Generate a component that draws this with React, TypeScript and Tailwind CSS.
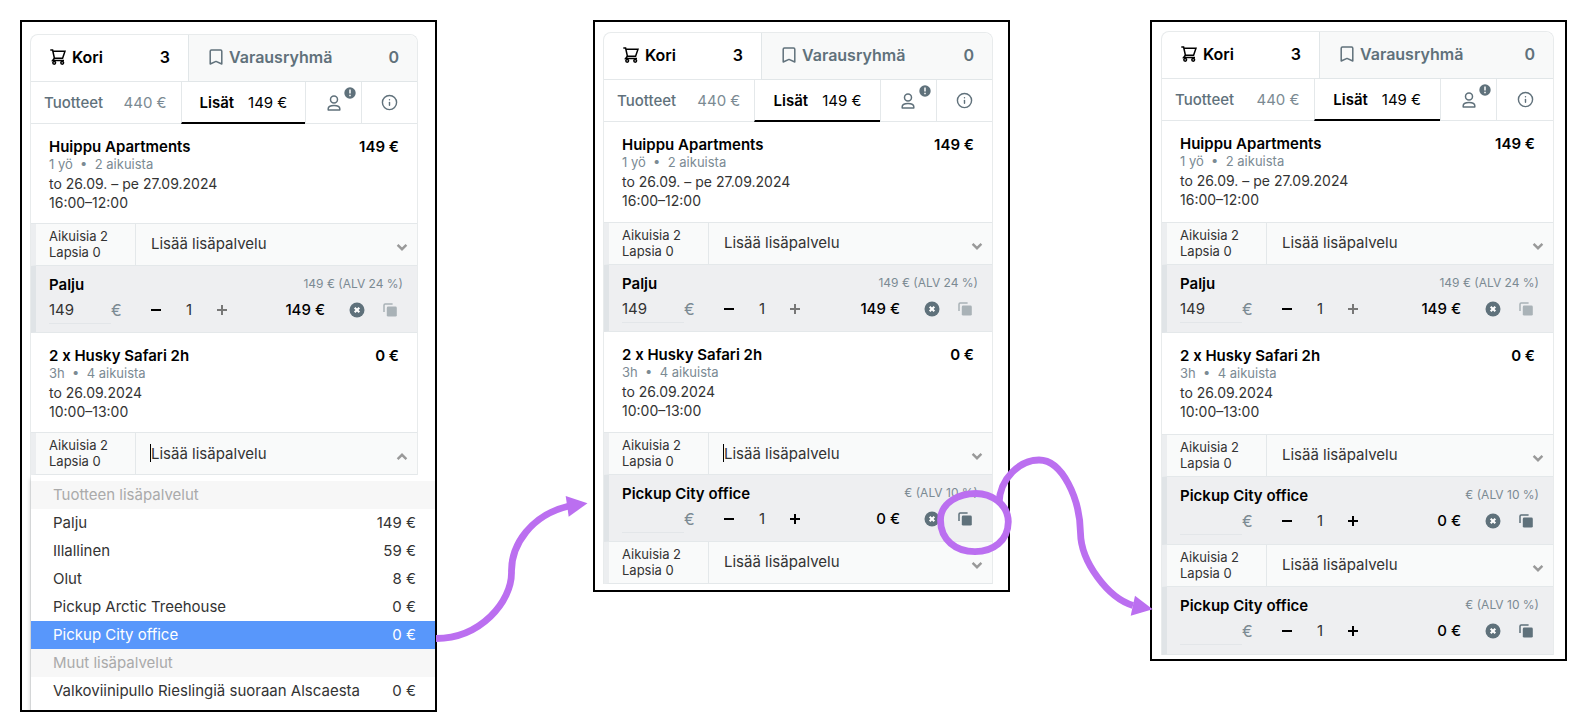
import React from 'react'
import clsx from 'clsx'
import { Info } from 'lucide-react'

type Extra = {
  name: string
  price: string
  vat: string
  total: string
  // one per booking: can't be increased or copied
  single?: boolean
}

type Row = {
  extra?: Extra
  focused?: boolean
  open?: boolean
}

type Product = {
  name: string
  total: string
  details: string
  date: string
  time: string
  rows: Row[]
}

type Sizes = {
  frame: string
  product: string
  extra: string
}

const palju: Extra = { name: 'Palju', price: '149', vat: '149 € (ALV 24 %)', total: '149 €', single: true }
const pickup: Extra = { name: 'Pickup City office', price: '', vat: '€ (ALV 10 %)', total: '0 €' }

const huippu = (rows: Row[]): Product => ({
  name: 'Huippu Apartments',
  total: '149 €',
  details: '1 yö  •  2 aikuista',
  date: 'to 26.09. – pe 27.09.2024',
  time: '16:00–12:00',
  rows,
})

const husky = (rows: Row[]): Product => ({
  name: '2 x Husky Safari 2h',
  total: '0 €',
  details: '3h  •  4 aikuista',
  date: 'to 26.09.2024',
  time: '10:00–13:00',
  rows,
})

const options = [
  { label: 'Tuotteen lisäpalvelut', group: true },
  { label: 'Palju', price: '149 €' },
  { label: 'Illallinen', price: '59 €' },
  { label: 'Olut', price: '8 €' },
  { label: 'Pickup Arctic Treehouse', price: '0 €' },
  { label: 'Pickup City office', price: '0 €', selected: true },
  { label: 'Muut lisäpalvelut', group: true },
  { label: 'Valkoviinipullo Rieslingiä suoraan Alscaesta', price: '0 €' },
]

const CartIcon = () => (
  <svg width="16" height="16" viewBox="0 0 16 16" fill="none" stroke="currentColor" strokeWidth="1.5">
    <path d="M0.3 1H2.6L4.4 9.2H12.6L15 2.2H3" />
    <path d="M4.4 9.2L2.6 11.6H14" />
    <circle cx="4.2" cy="13.8" r="1.4" />
    <circle cx="12.2" cy="13.8" r="1.4" />
  </svg>
)

const BookmarkIcon = () => (
  <svg width="14" height="16" viewBox="0 0 14 16" fill="none" stroke="currentColor" strokeWidth="1.5" strokeLinejoin="round">
    <path d="M1.2 2.2Q1.2 1 2.4 1H11.6Q12.8 1 12.8 2.2V15L7 12.4L1.2 15Z" />
  </svg>
)

const PersonIcon = () => (
  <svg width="14" height="16" viewBox="0 0 14 16" fill="none" stroke="currentColor" strokeWidth="1.5" strokeLinejoin="round">
    <circle cx="7" cy="4.6" r="3.5" />
    <path d="M1.2 15.1V13.8C1.2 11.8 3.3 10.4 7 10.4S12.8 11.8 12.8 13.8V15.1Z" />
  </svg>
)

const RemoveIcon = () => (
  <svg width="16" height="16" viewBox="0 0 16 16">
    <circle cx="8" cy="8" r="7.5" fill="#5f717b" />
    <path d="M5.7 5.7L10.3 10.3M10.3 5.7L5.7 10.3" stroke="#fff" strokeWidth="2.1" />
  </svg>
)

const CopyIcon = () => (
  <svg width="14" height="14" viewBox="0 0 14 14">
    <path d="M1 9V2.2Q1 1 2.2 1H9.6" fill="none" stroke="currentColor" strokeWidth="1.5" />
    <rect x="3.8" y="3.6" width="10" height="10" rx="1.4" fill="currentColor" />
  </svg>
)

const Chevron = ({ up }: { up?: boolean }) => (
  <svg
    className={clsx('pointer-events-none absolute right-[9px] top-[19px]', up && 'rotate-180')}
    width="12"
    height="9"
    viewBox="0 0 12 9"
    fill="none"
    stroke="#999"
    strokeWidth="2.4"
  >
    <path d="M1.6 1.8L6 6.2L10.4 1.8" />
  </svg>
)

const CartTabs = () => (
  <>
    <div className="flex h-[47px] text-base font-semibold">
      <button className="flex w-[157px] items-center gap-1.5 border-b border-[#e4e8ea] pb-[2px] pl-[19px] pr-[18px] text-black">
        <CartIcon />
        <span>Kori</span>
        <span className="ml-auto">3</span>
      </button>
      <button className="flex flex-1 items-center gap-1.5 rounded-tr-lg border-b border-l border-[#e1e6e8] bg-[#f8f9f9] pb-[2px] pl-5 pr-[18px] text-[#60717b]">
        <BookmarkIcon />
        <span>Varausryhmä</span>
        <span className="ml-auto">0</span>
      </button>
    </div>
    <div className="grid h-[42px] grid-cols-[150fr_125fr_56fr_56fr] text-[15px] text-[#60717b]">
      <button className="flex items-center justify-between border-b border-[#e4e8ea] pl-[13px] pr-[14px] pt-[2px]">
        <span className="font-medium">Tuotteet</span>
        <span className="text-[#7b8a93]">440 €</span>
      </button>
      <button className="flex items-center justify-center gap-3.5 border-b-2 border-l border-b-black border-l-[#e4e8ea] pt-[3px] text-black">
        <span className="font-semibold">Lisät</span>
        <span>149 €</span>
      </button>
      <button aria-label="Asiakas" className="relative flex items-center justify-center border-b border-l border-[#e4e8ea]">
        <PersonIcon />
        <svg className="absolute right-[5px] top-[5px]" width="12" height="12" viewBox="0 0 12 12">
          <circle cx="6" cy="6" r="5.7" fill="#5f717b" />
          <path d="M6 2.6V6.6M6 7.8V9.3" stroke="#fff" strokeWidth="1.5" />
        </svg>
      </button>
      <button aria-label="Tiedot" className="flex items-center justify-center border-b border-l border-[#e4e8ea]">
        <Info size={17} strokeWidth={2} />
      </button>
    </div>
  </>
)

const ExtraPicker = ({ focused, open }: Row) => (
  <div className="flex h-[42px] border-b border-l-[5px] border-b-[#e4e8ea] border-l-[#eceef0] bg-[#f9fafa]">
    <div className="w-[100px] border-r border-[#e4e8ea] pl-[13px] pt-[4px] text-[13px] leading-4 text-[#333]">
      <p>Aikuisia 2</p>
      <p>Lapsia 0</p>
    </div>
    <div className="relative flex-1 text-[15px] text-[#333]">
      {focused ? (
        <>
          <input
            role="combobox"
            aria-expanded={!!open}
            aria-label="Lisää lisäpalvelu"
            placeholder="Lisää lisäpalvelu"
            className="h-10 w-full bg-transparent pl-[15px] outline-none placeholder:text-[#333]"
          />
          <span className="absolute left-[14px] top-[11px] h-[18px] w-px bg-black" />
        </>
      ) : (
        <select aria-label="Lisää lisäpalvelu" className="h-10 w-full appearance-none bg-transparent pl-[15px] outline-none">
          <option>Lisää lisäpalvelu</option>
        </select>
      )}
      <Chevron up={open} />
    </div>
  </div>
)

const ExtraMenu = () => (
  <ul role="listbox" className="-mr-[18px] bg-white pb-[5px] pt-[6px] text-[15px] leading-7 text-[#333] shadow-[-1px_4px_4px_rgba(0,0,0,0.15)]">
    {options.map((o) => (
      <li
        key={o.label}
        role="option"
        aria-selected={!!o.selected}
        className={clsx(
          'flex justify-between pl-[22px] pr-[19px]',
          o.group && 'bg-[#f7f7f7] text-[#aaa]',
          o.selected && 'bg-[#5897fb] text-white'
        )}
      >
        <span>{o.label}</span>
        <span>{o.price}</span>
      </li>
    ))}
  </ul>
)

const ExtraRow = ({ extra, height }: { extra: Extra; height: string }) => (
  <div className={clsx('border-b border-l-[5px] border-b-[#e4e8ea] border-l-[#e0e4e7] bg-[#eeeff1] pl-[13px] pr-[14px] pt-[9px]', height)}>
    <div className="flex h-[21px] justify-between">
      <h3 className="text-[15px] font-semibold leading-5 text-black">{extra.name}</h3>
      <span className="text-xs leading-[17px] text-[#7b8a93]">{extra.vat}</span>
    </div>
    <div className="flex h-7 items-center text-[15px] text-[#333]">
      <input
        aria-label="Hinta"
        defaultValue={extra.price}
        className="h-7 w-[62px] border-b border-[#e3e6e9] bg-transparent outline-none"
      />
      <span className="w-[35px] text-base text-[#7b8a93]">€</span>
      <button aria-label="Vähennä" className="flex w-5 justify-center">
        <svg width="10" height="10" viewBox="0 0 10 10" stroke="#000" strokeWidth="2">
          <path d="M0 5H10" />
        </svg>
      </button>
      <span className="w-[46px] text-center">1</span>
      <button aria-label="Lisää" className={clsx('flex w-5 justify-center', extra.single ? 'text-[#777]' : 'text-black')}>
        <svg width="10" height="10" viewBox="0 0 10 10" stroke="currentColor" strokeWidth="2">
          <path d="M0 5H10M5 0V10" />
        </svg>
      </button>
      <span className="ml-auto font-medium text-black">{extra.total}</span>
      <button aria-label="Poista" className="ml-6">
        <RemoveIcon />
      </button>
      <button aria-label="Kopioi" className={clsx('ml-[18px] mr-[6px]', extra.single ? 'text-[#a9b2b7]' : 'text-[#5f717b]')}>
        <CopyIcon />
      </button>
    </div>
  </div>
)

const Cart = ({ products, sizes }: { products: Product[]; sizes: Sizes }) => (
  <div className={clsx('overflow-hidden border-2 border-black bg-white', sizes.frame)}>
    <div className="rounded-t-lg border border-b-0 border-[#e8ebec]">
      <CartTabs />
      {products.map((p) => (
        <section key={p.name}>
          <div className={clsx('border-b border-[#e4e8ea] pl-[18px] pr-[18px] pt-[13px]', sizes.product)}>
            <div className="flex justify-between text-[15px] font-semibold leading-5 text-black">
              <h2>{p.name}</h2>
              <span>{p.total}</span>
            </div>
            <p className="mb-[2px] whitespace-pre text-[13px] leading-[15px] text-[#7b8a93]">{p.details}</p>
            <p className="text-sm leading-[19px] text-[#333]">{p.date}</p>
            <p className="text-sm leading-[19px] text-[#333]">{p.time}</p>
          </div>
          {p.rows.map((row, i) => (
            <React.Fragment key={i}>
              <ExtraPicker {...row} />
              {row.open && <ExtraMenu />}
              {row.extra && <ExtraRow extra={row.extra} height={sizes.extra} />}
            </React.Fragment>
          ))}
        </section>
      ))}
    </div>
  </div>
)

// stretches sideways together with the columns below it
const Arrows = () => (
  <svg
    className="pointer-events-none absolute left-0 top-0 h-[727px] w-full"
    viewBox="0 0 1596 727"
    preserveAspectRatio="none"
    fill="none"
    stroke="#bb6ff0"
    strokeWidth="6.8"
  >
    <path d="M436 638.5C480 638.5 512 602 511.5 572C511 545 531 515 569 506" />
    <path d="M565.7 496L587.5 503.3L568.7 516.7Z" fill="#bb6ff0" stroke="none" />
    <path d="M1008.3 521.7C1008 541 993 551.7 975 551.7C956 551.7 940.5 540 940.5 520C940.5 502 960 493.5 976 493.5C990 493.5 1008 503 1008.3 521.7Z" />
    <path d="M999 503C1000 478 1020 460 1039 460C1062 460 1080 498 1080.5 533C1081 562 1108 598 1133 605.5" />
    <path d="M1135 595.7L1152.7 609.3L1130.7 615.7Z" fill="#bb6ff0" stroke="none" />
  </svg>
)

const App = () => {
  return (
    <main className="relative grid min-h-screen grid-cols-[417fr_156fr_417fr_140fr_417fr] items-start bg-white pl-5 pr-[29px] pt-5 font-['Inter','Liberation_Sans',sans-serif]">
      <Cart
        products={[huippu([{ extra: palju }]), husky([{ focused: true, open: true }])]}
        sizes={{ frame: 'pl-2 pr-[17px] pt-3', product: 'h-[100px]', extra: 'h-[67px]' }}
      />
      <div />
      <Cart
        products={[huippu([{ extra: palju }]), husky([{ focused: true, extra: pickup }, {}])]}
        sizes={{ frame: 'pb-[6px] pl-2 pr-[15px] pt-[10px]', product: 'h-[101px]', extra: 'h-[67px]' }}
      />
      <div />
      <Cart
        products={[huippu([{ extra: palju }]), husky([{ extra: pickup }, { extra: pickup }])]}
        sizes={{ frame: 'pb-1 pl-[9px] pr-[11px] pt-[9px]', product: 'h-[102px]', extra: 'h-[68px]' }}
      />
      <Arrows />
    </main>
  )
}

export default App
